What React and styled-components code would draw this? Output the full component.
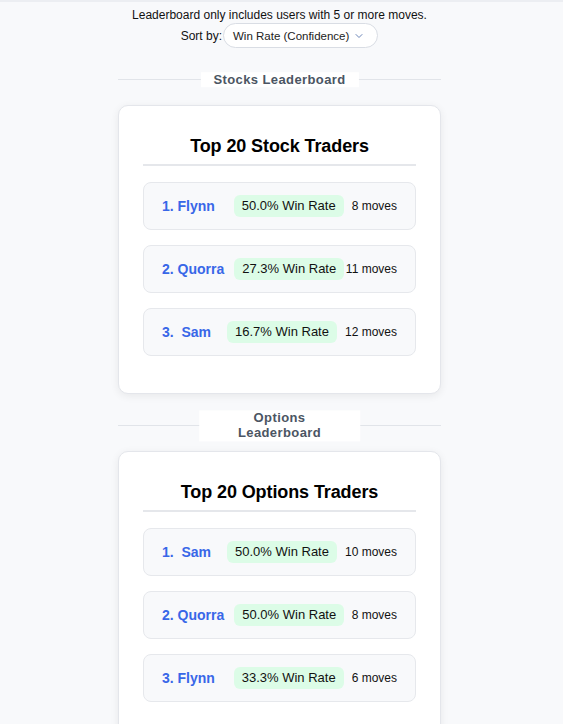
import React from 'react';
import styled, { createGlobalStyle } from 'styled-components';
import { ChevronDown } from 'lucide-react';

const GlobalStyle = createGlobalStyle`
  html, body {
    margin: 0;
    padding: 0;
    background: #f8f9fb;
    font-family: "Liberation Sans", Arial, sans-serif;
    color: #111;
  }
`;

const boards = [
  {
    label: 'Stocks Leaderboard',
    title: 'Top 20 Stock Traders',
    rows: [
      { name: 'Flynn', rate: '50.0%', moves: 8 },
      { name: 'Quorra', rate: '27.3%', moves: 11 },
      { name: ' Sam', rate: '16.7%', moves: 12 },
    ],
  },
  {
    label: 'Options Leaderboard',
    title: 'Top 20 Options Traders',
    rows: [
      { name: ' Sam', rate: '50.0%', moves: 10 },
      { name: 'Quorra', rate: '50.0%', moves: 8 },
      { name: 'Flynn', rate: '33.3%', moves: 6 },
    ],
  },
];

const App = () => {
  return (
    <>
      <GlobalStyle />
      <Page>
        <Column>
          <Info>Leaderboard only includes users with 5 or more moves.</Info>
          <SortRow>
            <SortLabel>Sort by:</SortLabel>
            <SortSelect type="button">
              Win Rate (Confidence)
              <ChevronDown size={12} strokeWidth={2} color="#6b85b8" />
            </SortSelect>
          </SortRow>

          {boards.map((board) => (
            <React.Fragment key={board.label}>
              <Divider>
                <DividerLabel>{board.label}</DividerLabel>
              </Divider>
              <Card>
                <CardTitle>{board.title}</CardTitle>
                <List>
                  {board.rows.map((row, i) => (
                    <Row key={row.name}>
                      <Name>{`${i + 1}. ${row.name}`}</Name>
                      <WinRate>{row.rate} Win Rate</WinRate>
                      <Moves>
                        <span>{row.moves} moves</span>
                      </Moves>
                    </Row>
                  ))}
                </List>
              </Card>
            </React.Fragment>
          ))}
        </Column>
      </Page>
    </>
  );
};

const Page = styled.div`
  border-top: 2px solid #eceef2;
  padding: 6px 4px 0 0;
`;

const Column = styled.div`
  width: 323px;
  margin: 0 auto;
  display: flex;
  flex-direction: column;
`;

const Info = styled.p`
  margin: 0;
  font-size: 12px;
  line-height: 14px;
  text-align: center;
`;

const SortRow = styled.div`
  margin-top: 1px;
  display: flex;
  align-items: center;
  justify-content: center;
  gap: 1px;
`;

const SortLabel = styled.span`
  font-size: 12px;
`;

const SortSelect = styled.button`
  box-sizing: border-box;
  height: 25px;
  display: inline-flex;
  align-items: center;
  gap: 4px;
  padding: 0 12px 0 9px;
  border: 1px solid #d9dde4;
  border-radius: 999px;
  background: #fff;
  font-family: inherit;
  font-size: 11.5px;
  color: #222;
`;

const Divider = styled.div`
  position: relative;
  height: 1px;
  margin: 31px 0 25px;
  background: #e1e4e9;
`;

const DividerLabel = styled.span`
  position: absolute;
  left: 50%;
  top: 50%;
  transform: translate(-50%, -50%);
  padding: 0 13px;
  background: #fff;
  font-size: 13px;
  font-weight: 700;
  line-height: 1.2;
  letter-spacing: 0.4px;
  color: #4b5563;
  text-align: center;
`;

const Card = styled.section`
  background: #fff;
  border: 1px solid #e4e6eb;
  border-radius: 10px;
  box-shadow: 0 2px 8px rgba(0, 0, 0, 0.07);
  padding: 24px 24px 37px;
`;

const CardTitle = styled.h2`
  margin: 5px 0 16px;
  padding-bottom: 7px;
  border-bottom: 2px solid #e5e7eb;
  font-size: 18px;
  line-height: 22px;
  letter-spacing: -0.1px;
  font-weight: 700;
  text-align: center;
  color: #000;
`;

const List = styled.div`
  display: flex;
  flex-direction: column;
  gap: 15px;
`;

const Row = styled.div`
  display: flex;
  align-items: center;
  padding: 12px 18px;
  background: #f8f9fb;
  border: 1px solid #e6e8ec;
  border-radius: 8px;
`;

const Name = styled.span`
  flex: 1;
  white-space: pre;
  font-size: 14px;
  font-weight: 700;
  color: #3867e8;
`;

const WinRate = styled.span`
  flex-shrink: 0;
  margin: 0 8px 0 10px;
  padding: 4px 8px;
  border-radius: 6px;
  background: #dcfce7;
  font-size: 13px;
  line-height: 14px;
  white-space: nowrap;
`;

const Moves = styled.span`
  min-width: 0;
  display: flex;
  justify-content: flex-end;
  white-space: nowrap;
  font-size: 12px;
`;

export default App;
